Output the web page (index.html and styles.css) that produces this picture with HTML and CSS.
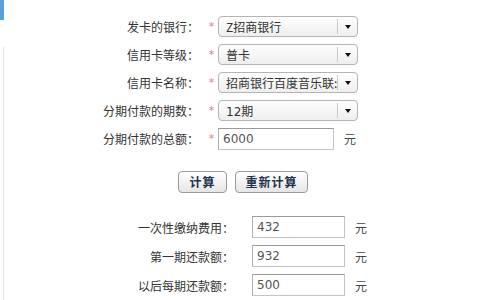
FILE: index.html
```html
<!DOCTYPE html>
<html lang="zh-CN">
<head>
<meta charset="utf-8">
<link rel="stylesheet" href="styles.css">
</head>
<body>
<div class="page">
  <div class="side">
    <div class="side-tab"></div>
    <div class="side-line"></div>
  </div>
  <div class="main">
    <div class="form">
      <div class="row">
        <div class="label">发卡的银行：</div>
        <div class="star">*</div>
        <div class="select"><span class="sel-text">Z招商银行</span><span class="sel-btn"><span class="arrow"></span></span></div>
      </div>
      <div class="row">
        <div class="label">信用卡等级：</div>
        <div class="star">*</div>
        <div class="select"><span class="sel-text">普卡</span><span class="sel-btn"><span class="arrow"></span></span></div>
      </div>
      <div class="row">
        <div class="label">信用卡名称：</div>
        <div class="star">*</div>
        <div class="select"><span class="sel-text">招商银行百度音乐联:</span><span class="sel-btn"><span class="arrow"></span></span></div>
      </div>
      <div class="row">
        <div class="label">分期付款的期数：</div>
        <div class="star">*</div>
        <div class="select"><span class="sel-text num">12期</span><span class="sel-btn"><span class="arrow"></span></span></div>
      </div>
      <div class="row">
        <div class="label">分期付款的总额：</div>
        <div class="star">*</div>
        <div class="input amount">6000</div>
        <div class="unit">元</div>
      </div>
    </div>
    <div class="buttons">
      <div class="btn btn-calc">计算</div>
      <div class="btn btn-reset">重新计算</div>
    </div>
    <div class="results">
      <div class="rrow">
        <div class="rlabel">一次性缴纳费用：</div>
        <div class="input result">432</div>
        <div class="unit runit">元</div>
      </div>
      <div class="rrow">
        <div class="rlabel">第一期还款额：</div>
        <div class="input result">932</div>
        <div class="unit runit">元</div>
      </div>
      <div class="rrow">
        <div class="rlabel">以后每期还款额：</div>
        <div class="input result">500</div>
        <div class="unit runit">元</div>
      </div>
    </div>
  </div>
</div>
</body>
</html>
```
FILE: styles.css
```css
html, body {
  margin: 0;
  padding: 0;
  background: #ffffff;
}
body {
  width: 480px;
  height: 300px;
  overflow: hidden;
  font-family: "Noto Sans CJK SC", "DejaVu Sans", sans-serif;
  font-size: 12px;
  color: #333333;
}
.page {
  display: flex;
  height: 300px;
}
.side {
  width: 6px;
  display: flex;
  flex-direction: column;
}
.side-tab {
  width: 4px;
  height: 20px;
  background: #5aa0dc;
}
.side-line {
  margin-top: 27px;
  margin-left: 3px;
  flex: 1;
  border-left: 1px solid #e2e2e2;
}
.main {
  flex: 1;
  display: flex;
  flex-direction: column;
}
.form {
  padding-top: 16px;
  display: flex;
  flex-direction: column;
  gap: 7px;
}
.row {
  display: flex;
  align-items: center;
  height: 21px;
}
.label {
  width: 199px;
  box-sizing: border-box;
  padding-right: 6px;
  text-align: right;
  white-space: nowrap;
  line-height: 21px;
}
.star {
  width: 13px;
  text-align: center;
  color: #e07a8a;
  font-family: "DejaVu Sans", sans-serif;
  font-size: 11px;
  line-height: 21px;
}
.select {
  width: 140px;
  height: 21px;
  box-sizing: border-box;
  border: 1px solid #b4b4b4;
  border-radius: 4px;
  background: linear-gradient(#ffffff, #eeeeee);
  display: flex;
  align-items: center;
}
.sel-text {
  flex: 1;
  padding-left: 7px;
  white-space: nowrap;
  overflow: hidden;
  color: #333333;
  font-size: 12px;
}
.num {
  font-family: "DejaVu Sans", "Noto Sans CJK SC", sans-serif;
}
.sel-btn {
  width: 19px;
  height: 15px;
  border-left: 1px solid #c8c8c8;
  display: flex;
  align-items: center;
  justify-content: center;
}
.arrow {
  width: 0;
  height: 0;
  border-left: 3px solid transparent;
  border-right: 3px solid transparent;
  border-top: 4px solid #111111;
}
.input {
  height: 22px;
  box-sizing: border-box;
  border: 1px solid #c4c4c4;
  border-top-color: #9a9a9a;
  border-left-color: #b0b0b0;
  background: #ffffff;
  font-family: "DejaVu Sans", sans-serif;
  font-size: 12px;
  color: #555555;
  line-height: 20px;
  padding-left: 4px;
}
.amount {
  width: 116px;
}
.unit {
  margin-left: 10px;
  color: #444444;
}
.buttons {
  margin-top: 22px;
  padding-left: 172px;
  display: flex;
  gap: 8px;
}
.btn {
  height: 22px;
  box-sizing: border-box;
  border: 1px solid #9a9a9a;
  border-radius: 4px;
  background: linear-gradient(#ffffff, #e6e6e6);
  font-weight: bold;
  color: #24324c;
  font-size: 12px;
  line-height: 20px;
  text-align: center;
  letter-spacing: 1px;
}
.btn-calc {
  width: 49px;
}
.btn-reset {
  width: 73px;
}
.results {
  margin-top: 23px;
  display: flex;
  flex-direction: column;
  gap: 7px;
}
.rrow {
  display: flex;
  align-items: center;
  height: 22px;
}
.rlabel {
  width: 234px;
  box-sizing: border-box;
  padding-right: 6px;
  text-align: right;
  white-space: nowrap;
}
.result {
  margin-left: 12px;
  width: 93px;
}
.runit {
  margin-left: 10px;
}
```
